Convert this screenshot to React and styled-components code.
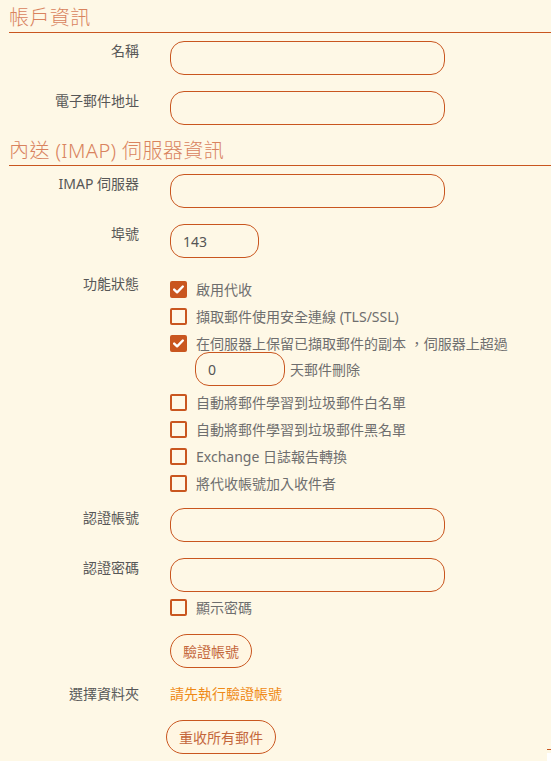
import React from "react";
import styled, { createGlobalStyle } from "styled-components";

const ACCENT = "#c9561f";
const BG = "#fef8e6";

const Global = createGlobalStyle`
  html, body { margin: 0; padding: 0; background: ${BG}; }
  body {
    font-family: "Noto Sans", "Noto Sans CJK TC", sans-serif;
    font-size: 14px;
    color: #666;
    overflow: hidden;
  }
  * { box-sizing: border-box; }
`;

const Page = styled.div`
  padding-left: 9px;
  padding-top: 4px;
  min-height: 761px;
`;

const SectionTitle = styled.h2`
  margin: ${(p) => (p.$first ? "0" : "12px")} 0 0 0;
  font-size: 20px;
  line-height: 28px;
  font-weight: 300;
  color: #d9835e;
  border-bottom: 1px solid ${ACCENT};
  letter-spacing: 0.4px;
`;

const Form = styled.div`
  display: grid;
  grid-template-columns: 130px 1fr;
  column-gap: 31px;
  row-gap: 16px;
  padding-top: 8px;
`;

const Label = styled.div`
  text-align: right;
  line-height: 20px;
  font-size: 14px;
  font-weight: 400;
  color: #575757;
  white-space: nowrap;
`;

const Field = styled.div`
  display: flex;
  flex-direction: column;
  align-items: flex-start;
`;

const TextInput = styled.input`
  width: ${(p) => p.$w || 275}px;
  height: 34px;
  border: 1px solid ${ACCENT};
  border-radius: 14px;
  background: ${BG};
  padding: 0 12px;
  font-family: inherit;
  font-size: 14px;
  color: #555;
  outline: none;
`;

const Options = styled.div`
  display: flex;
  flex-direction: column;
  margin-top: 2px;
  margin-bottom: -5px;
`;

const Option = styled.label`
  display: flex;
  align-items: flex-start;
  gap: 9px;
  padding: 5px 0;
  margin-top: ${(p) => p.$mt || 0}px;
  font-size: 14px;
  line-height: 17px;
  color: #6e6e6e;
  white-space: nowrap;
`;

const Box = styled.span`
  flex: 0 0 auto;
  width: 17px;
  height: 17px;
  border: 2px solid ${ACCENT};
  border-radius: 2px;
  background: ${(p) => (p.$checked ? ACCENT : "transparent")};
  display: flex;
  align-items: center;
  justify-content: center;
`;

const OptionBody = styled.div`
  display: flex;
  flex-direction: column;
  align-items: flex-start;
`;

const InlineRow = styled.div`
  display: flex;
  align-items: center;
  gap: 5px;
  margin-left: -1px;
  margin-bottom: -2px;
`;

const PillButton = styled.button`
  height: 34px;
  padding: 0 12px;
  margin-left: ${(p) => p.$ml || 0}px;
  margin-top: ${(p) => p.$mt || 0}px;
  border: 1px solid ${ACCENT};
  border-radius: 17px;
  background: #fff6e2;
  color: #c4673c;
  font-family: inherit;
  font-size: 14px;
  cursor: pointer;
`;

const Notice = styled.div`
  line-height: 20px;
  font-size: 14px;
  color: #ef8a17;
`;

const EdgeMark = styled.div`
  position: absolute;
  right: 0;
  bottom: 0;
  width: 4px;
  height: 12px;
  border-top: 1px solid ${ACCENT};
  background: linear-gradient(${BG} 0 3px, #ffffff 3px);
`;

const Frame = styled.div`
  position: relative;
`;

function Check({ checked }) {
  return (
    <Box $checked={checked}>
      {checked && (
        <svg width="11" height="9" viewBox="0 0 11 9">
          <path d="M1.2 4.6 L4.1 7.3 L9.8 1.5" fill="none" stroke="#fff" strokeWidth="2.4" strokeLinecap="round" strokeLinejoin="round" />
        </svg>
      )}
    </Box>
  );
}

function Opt({ checked, children, mt }) {
  return (
    <Option $mt={mt}>
      <Check checked={checked} />
      <span>{children}</span>
    </Option>
  );
}

export default function App() {
  return (
    <Frame>
      <Global />
      <Page>
        <SectionTitle $first>帳戶資訊</SectionTitle>
        <Form>
          <Label>名稱</Label>
          <Field><TextInput /></Field>
          <Label>電子郵件地址</Label>
          <Field><TextInput /></Field>
        </Form>

        <SectionTitle>內送 (IMAP) 伺服器資訊</SectionTitle>
        <Form>
          <Label>IMAP 伺服器</Label>
          <Field><TextInput /></Field>
          <Label>埠號</Label>
          <Field><TextInput $w={89} defaultValue="143" /></Field>
          <Label>功能狀態</Label>
          <Options>
            <Opt checked>啟用代收</Opt>
            <Opt>擷取郵件使用安全連線 (TLS/SSL)</Opt>
            <Option>
              <Check checked />
              <OptionBody>
                <span>在伺服器上保留已擷取郵件的副本 ，伺服器上超過</span>
                <InlineRow>
                  <TextInput $w={90} defaultValue="0" />
                  <span>天郵件刪除</span>
                </InlineRow>
              </OptionBody>
            </Option>
            <Opt>自動將郵件學習到垃圾郵件白名單</Opt>
            <Opt>自動將郵件學習到垃圾郵件黑名單</Opt>
            <Opt>Exchange 日誌報告轉換</Opt>
            <Opt>將代收帳號加入收件者</Opt>
          </Options>
          <Label>認證帳號</Label>
          <Field><TextInput /></Field>
          <Label>認證密碼</Label>
          <Field>
            <TextInput type="password" />
            <Option $mt={2}>
              <Check />
              <span>顯示密碼</span>
            </Option>
            <PillButton $mt={13}>驗證帳號</PillButton>
          </Field>
          <Label>選擇資料夾</Label>
          <Notice>請先執行驗證帳號</Notice>
          <span />
          <Field>
            <PillButton $ml={-4}>重收所有郵件</PillButton>
          </Field>
        </Form>
      </Page>
      <EdgeMark />
    </Frame>
  );
}
